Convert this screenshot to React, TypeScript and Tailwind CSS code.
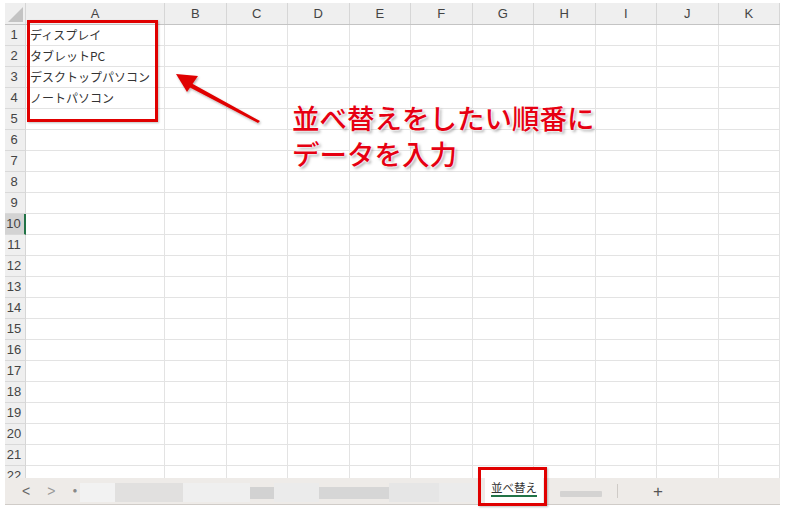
import React from "react";

const COLS = ["A", "B", "C", "D", "E", "F", "G", "H", "I", "J", "K"];
const DATA: Record<number, string> = {
  1: "ディスプレイ",
  2: "タブレットPC",
  3: "デスクトップパソコン",
  4: "ノートパソコン",
};

function colClass(i: number) {
  return i === 0 ? "w-[139px]" : "w-[61.5px]";
}

export default function App() {
  const rows = Array.from({ length: 22 }, (_, i) => i + 1);
  return (
    <div className="relative w-[812px] h-[513px] overflow-hidden bg-white font-['Liberation_Sans','Noto_Sans_CJK_JP',sans-serif]">
      <div className="pl-[5px] pt-[3px] w-[780px]">
        {/* column header */}
        <div className="flex h-[22px] bg-[#efefef] border-b border-[#c4c4c4]">
          <div className="w-[21px] shrink-0 border-r border-[#d6d6d6] relative">
            <svg className="absolute left-[3px] top-[4px]" width="15" height="15" viewBox="0 0 15 15">
              <polygon points="15,0 15,15 0,15" fill="#c3c3c3" />
            </svg>
          </div>
          {COLS.map((c, i) => (
            <div
              key={c}
              className={`${colClass(i)} shrink-0 border-r border-[#d6d6d6] flex items-center justify-center text-[13px] text-[#444]`}
            >
              {c}
            </div>
          ))}
        </div>
        {/* rows */}
        <div className="h-[453px] overflow-hidden">
          {rows.map((r) => (
            <div key={r} className="flex h-[21px]">
              <div
                className={`w-[21px] shrink-0 flex items-center justify-center pr-[2px] text-[13px] text-[#444] border-b border-[#d9d9d9] ${
                  r === 10 ? "bg-[#d3d3d3] border-r-2 border-r-[#217346]" : "bg-[#efefef] border-r border-r-[#d6d6d6]"
                }`}
              >
                {r}
              </div>
              {COLS.map((c, i) => (
                <div
                  key={c}
                  className={`${colClass(i)} shrink-0 border-r border-b border-[#e3e3e3] flex items-center pl-[4px] text-[12px] text-[#333] font-['Noto_Sans_CJK_JP',sans-serif] whitespace-nowrap`}
                >
                  {i === 0 ? DATA[r] ?? "" : ""}
                </div>
              ))}
            </div>
          ))}
        </div>
        {/* sheet tab bar */}
        <div className="flex items-end h-[27px] bg-[#eeebe8] border-b border-[#d0ccc8] text-[#555]">
          <div className="self-center flex items-center w-[75px] pl-[17px] gap-[17px] text-[14px] text-[#666]">
            <span>&lt;</span>
            <span className="text-[#999]">&gt;</span>
            <span className="text-[8px] text-[#888]">●</span>
          </div>
          <div className="self-center flex items-center h-[19px] mt-[3px] w-[395px]">
            <div className="w-[35px] h-full bg-[#f2f2f2]" />
            <div className="w-[68px] h-full bg-[#dcdcdc] opacity-70" />
            <div className="w-[67px] h-full bg-[#efefef]" />
            <div className="w-[24px] h-[12px] bg-[#d2d2d2]" />
            <div className="w-[45px] h-full bg-[#ebebeb]" />
            <div className="w-[70px] h-[12px] bg-[#d6d6d6]" />
            <div className="w-[50px] h-full bg-[#e6e6e6]" />
            <div className="w-[36px] h-full bg-[#ebebeb]" />
          </div>
          <div className="ml-[10px] w-[58px] h-[35px] bg-white flex flex-col items-center justify-end pb-[7px] shrink-0">
            <span className="text-[11.5px] text-[#333] font-['Noto_Sans_CJK_JP',sans-serif] leading-[14px] border-b-2 border-[#217346] pb-[1px]">
              並べ替え
            </span>
          </div>
          <div className="self-center ml-[17px] w-[42px] h-[6px] mt-[6px] bg-[#c9c9c9] opacity-70 rounded-[1px]" />
          <div className="self-center ml-[15px] w-px h-[14px] bg-[#cfcbc7]" />
          <div className="self-center ml-[35px] text-[17px] text-[#555] leading-none mt-[1px]">+</div>
        </div>
      </div>

      {/* red box around A1:A5 */}
      <div className="absolute left-[27px] top-[20px] w-[131px] h-[102px] border-[3px] border-[#e00000] shadow-[1px_1px_2px_rgba(0,0,0,0.25)]" />

      {/* arrow */}
      <svg className="absolute left-[165px] top-[65px]" width="110" height="70" viewBox="0 0 110 70">
        <defs>
          <filter id="sh" x="-20%" y="-20%" width="140%" height="140%">
            <feDropShadow dx="1" dy="1.5" stdDeviation="1" floodColor="#000" floodOpacity="0.3" />
          </filter>
        </defs>
        <g filter="url(#sh)">
          <polygon points="95,56 26,18 24,22 93,58" fill="#e00000" />
          <polygon points="11,9 33,11 22,27" fill="#e00000" />
        </g>
      </svg>

      {/* annotation */}
      <div className="absolute left-[292px] top-[99px] text-[27.5px] leading-[36px] font-medium text-[#e60012] font-['Noto_Sans_CJK_JP',sans-serif] whitespace-nowrap [text-shadow:0_0_2px_#fff,0_0_2px_#fff,0_0_3px_#fff,2px_2px_3px_rgba(0,0,0,0.35)]">
        <div>並べ替えをしたい順番に</div>
        <div>データを入力</div>
      </div>

      {/* red box around tab */}
      <div className="absolute left-[478px] top-[467px] w-[69px] h-[39px] border-[3px] border-[#e00000] shadow-[1px_1px_2px_rgba(0,0,0,0.25)]" />
    </div>
  );
}
